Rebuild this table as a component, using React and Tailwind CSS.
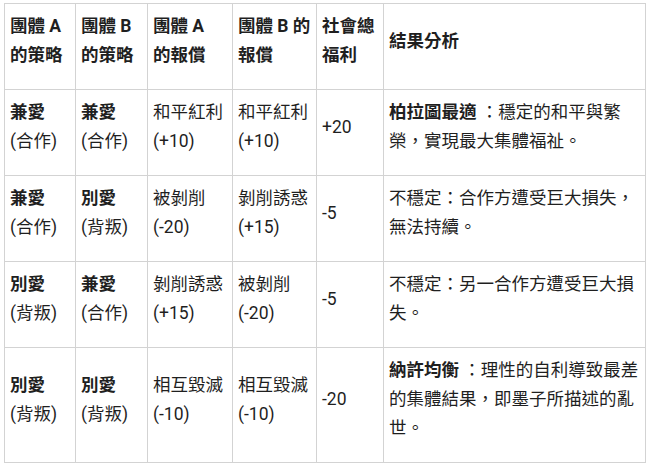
import React from 'react';

const rows = [
  {
    a: ['兼愛', '(合作)'],
    b: ['兼愛', '(合作)'],
    pa: ['和平紅利', '(+10)'],
    pb: ['和平紅利', '(+10)'],
    total: '+20',
    tag: '柏拉圖最適',
    note: '：穩定的和平與繁榮，實現最大集體福祉。',
  },
  {
    a: ['兼愛', '(合作)'],
    b: ['別愛', '(背叛)'],
    pa: ['被剝削', '(-20)'],
    pb: ['剝削誘惑', '(+15)'],
    total: '-5',
    note: '不穩定：合作方遭受巨大損失，無法持續。',
  },
  {
    a: ['別愛', '(背叛)'],
    b: ['兼愛', '(合作)'],
    pa: ['剝削誘惑', '(+15)'],
    pb: ['被剝削', '(-20)'],
    total: '-5',
    note: '不穩定：另一合作方遭受巨大損失。',
  },
  {
    a: ['別愛', '(背叛)'],
    b: ['別愛', '(背叛)'],
    pa: ['相互毀滅', '(-10)'],
    pb: ['相互毀滅', '(-10)'],
    total: '-20',
    tag: '納許均衡',
    note: '：理性的自利導致最差的集體結果，即墨子所描述的亂世。',
  },
];

const cell = 'border border-[#d3d3d3] px-[5px] pt-2 pb-[19px] align-middle text-left';

const Strategy = ({ v }) => (
  <>
    <span className="font-bold">{v[0]}</span>
    <br />
    {v[1]}
  </>
);

const Payoff = ({ v }) => (
  <>
    {v[0]}
    <br />
    {v[1]}
  </>
);

export default function App() {
  return (
    <div
      className="min-h-screen bg-white pt-[3px] pl-[4px] text-[#1f1f1f] text-[17.5px] leading-[29px]"
      style={{ fontFamily: 'Roboto, "Noto Sans CJK TC", sans-serif' }}
    >
      <table className="table-fixed border-collapse w-[641px]">
        <colgroup>
          <col className="w-[71px]" />
          <col className="w-[72px]" />
          <col className="w-[85px]" />
          <col className="w-[84px]" />
          <col className="w-[67px]" />
          <col className="w-[262px]" />
        </colgroup>
        <thead>
          <tr className="font-bold">
            <th className={cell}>團體 A<br />的策略</th>
            <th className={cell}>團體 B<br />的策略</th>
            <th className={cell}>團體 A<br />的報償</th>
            <th className={cell}>團體 B 的<br />報償</th>
            <th className={cell}>社會總<br />福利</th>
            <th className={cell}>結果分析</th>
          </tr>
        </thead>
        <tbody>
          {rows.map((r, i) => (
            <tr key={i}>
              <td className={cell}><Strategy v={r.a} /></td>
              <td className={cell}><Strategy v={r.b} /></td>
              <td className={cell}><Payoff v={r.pa} /></td>
              <td className={cell}><Payoff v={r.pb} /></td>
              <td className={cell}>{r.total}</td>
              <td className={cell}>
                {r.tag && <span className="font-bold">{r.tag}</span>}
                {r.tag ? ' ' : ''}
                {r.note}
              </td>
            </tr>
          ))}
        </tbody>
      </table>
    </div>
  );
}
